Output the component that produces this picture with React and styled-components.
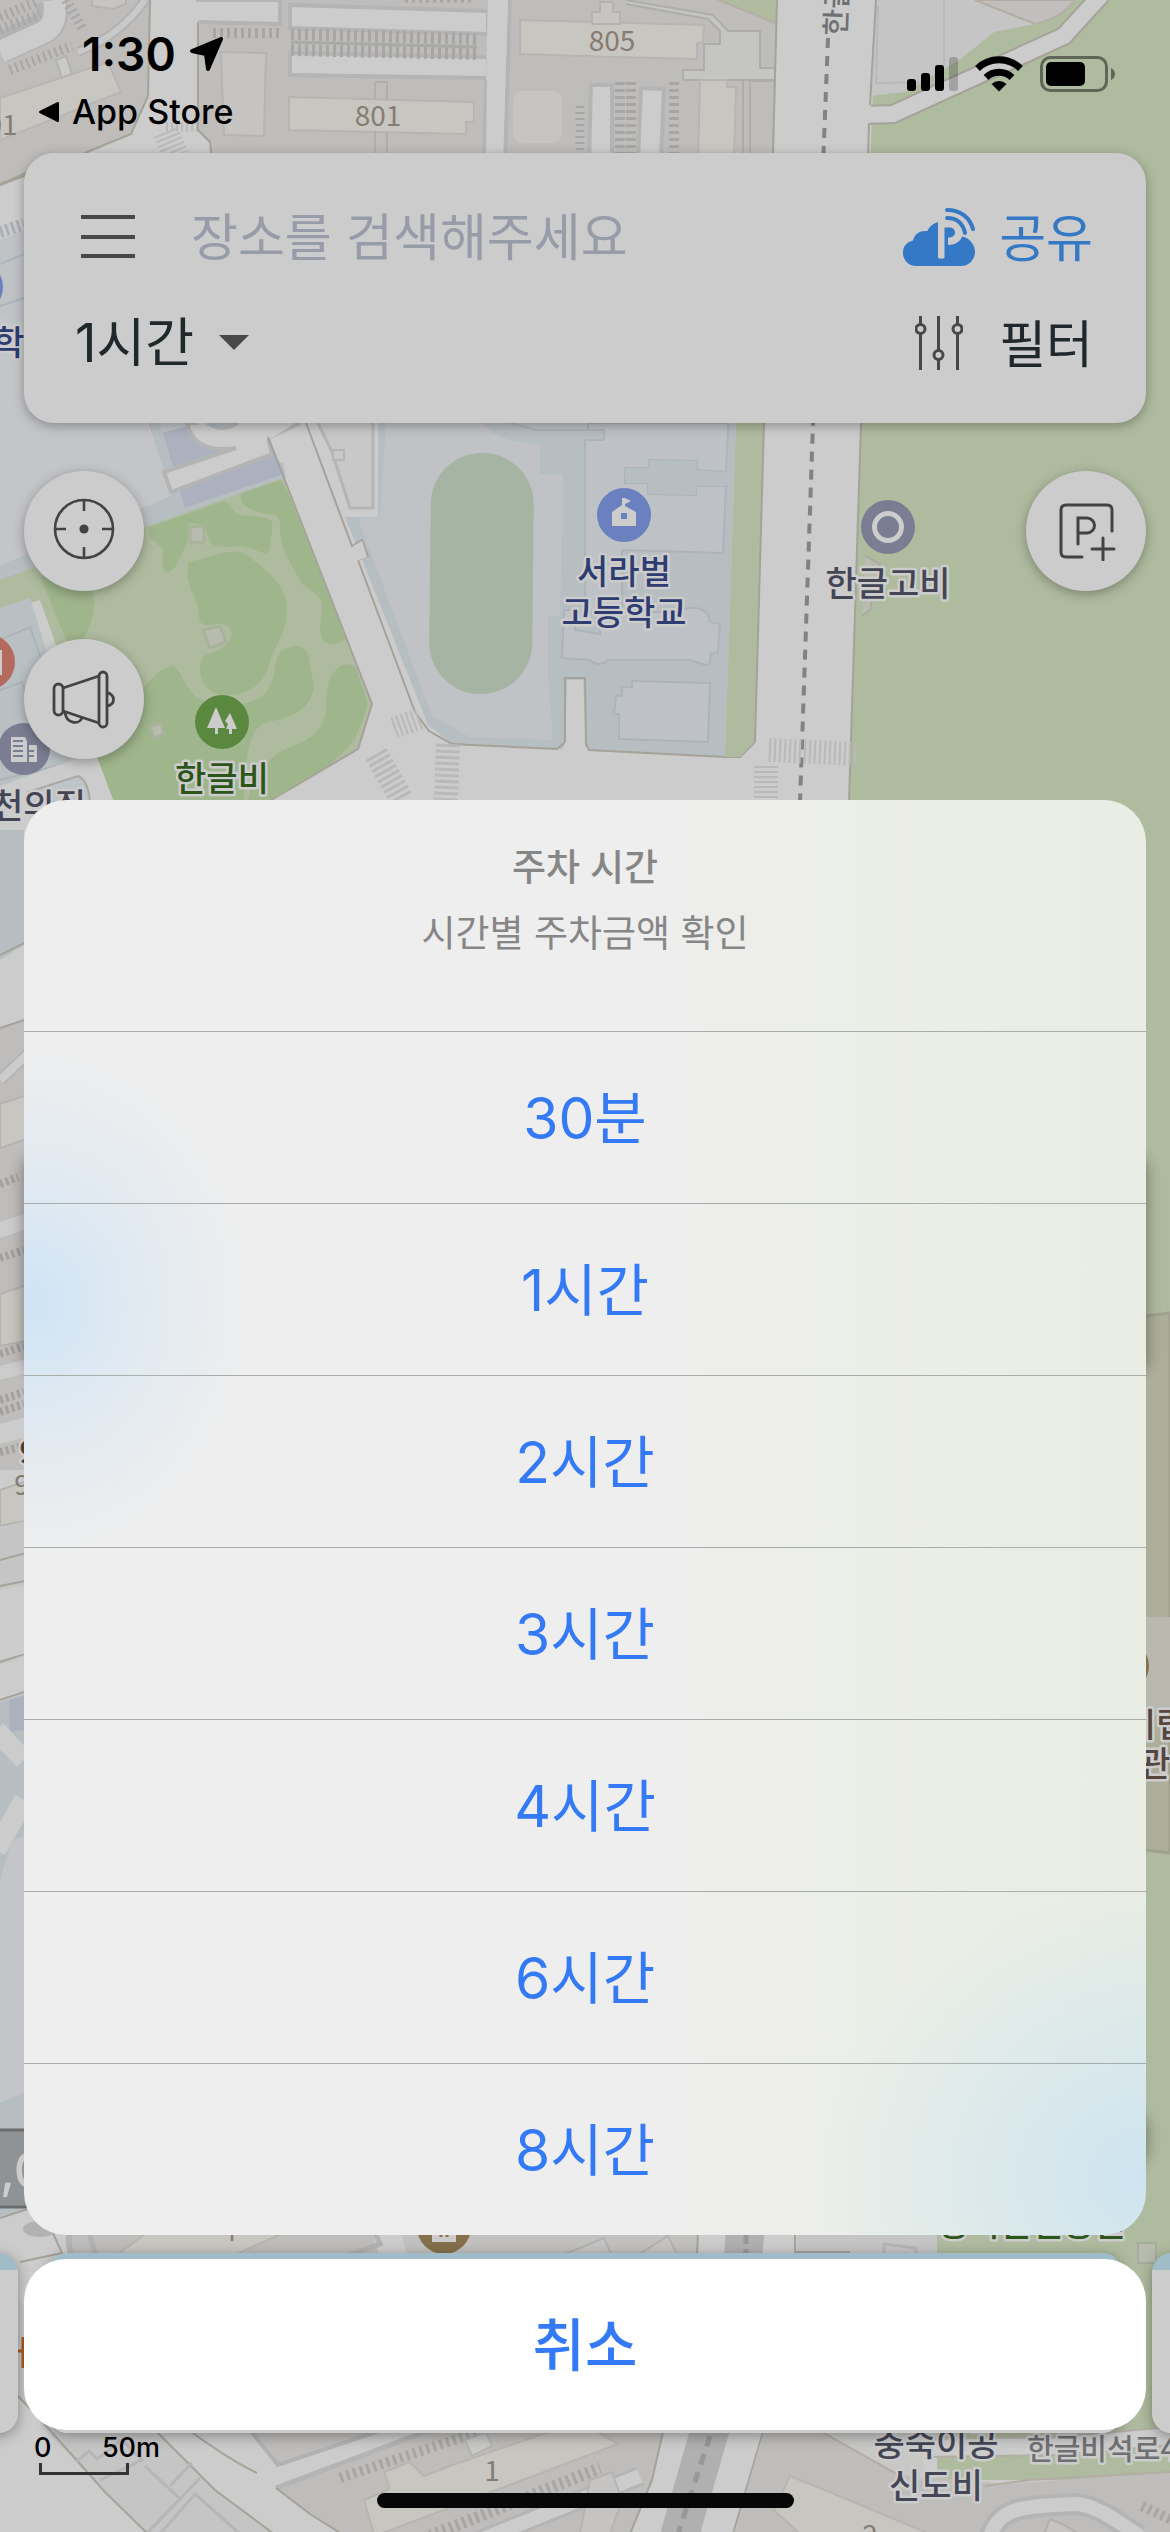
import React, { useState } from "react";
import styled, { createGlobalStyle } from "styled-components";

const durations = ["30분", "1시간", "2시간", "3시간", "4시간", "6시간", "8시간"];

const App = () => {
  const [duration, setDuration] = useState("1시간");
  const [query, setQuery] = useState("");

  return (
    <>
      <GlobalStyle />
      <Screen>
        <MapLayer />

        <Content>
          <StatusBar>
            <StatusLeft>
              <Clock>
                1:30 <LocationIcon />
              </Clock>
              <BackLink href="#">
                <BackIcon />
                App Store
              </BackLink>
            </StatusLeft>
            <StatusIcons />
          </StatusBar>

          <SearchCard>
            <SearchRow>
              <PlainButton aria-label="메뉴">
                <MenuIcon />
              </PlainButton>
              <SearchInput
                aria-label="장소 검색"
                placeholder="장소를 검색해주세요"
                value={query}
                onChange={(e) => setQuery(e.target.value)}
              />
              <TextButton $share>
                <CloudIcon />
                <span>공유</span>
              </TextButton>
            </SearchRow>
            <SearchRow>
              <SelectBox>
                <select aria-label="주차 시간" value={duration} onChange={(e) => setDuration(e.target.value)}>
                  {durations.map((item) => (
                    <option key={item}>{item}</option>
                  ))}
                </select>
                <CaretIcon />
              </SelectBox>
              <TextButton>
                <FilterIcon />
                <span>필터</span>
              </TextButton>
            </SearchRow>
          </SearchCard>

          <Tools>
            <ToolColumn>
              <RoundButton aria-label="현재 위치">
                <TargetIcon />
              </RoundButton>
              <RoundButton aria-label="공지">
                <MegaphoneIcon />
              </RoundButton>
            </ToolColumn>
            <ToolColumn>
              <RoundButton aria-label="주차장 추가">
                <ParkingAddIcon />
              </RoundButton>
            </ToolColumn>
          </Tools>

          <Carousel>
            <PlaceCard />
            <PlaceCard />
            <PlaceCard />
          </Carousel>

          <Footer>
            <Scale>
              <ScaleLabels>
                <span>0</span>
                <span>50m</span>
              </ScaleLabels>
              <ScaleBar />
            </Scale>
            <HomeIndicator />
          </Footer>
        </Content>

        <Overlay>
          <Sheet role="dialog" aria-labelledby="sheet-title">
            <SheetHeader>
              <h2 id="sheet-title">주차 시간</h2>
              <p>시간별 주차금액 확인</p>
            </SheetHeader>
            {durations.map((item) => (
              <SheetOption key={item} onClick={() => setDuration(item)}>
                {item}
              </SheetOption>
            ))}
          </Sheet>
          <CancelButton>취소</CancelButton>
        </Overlay>
      </Screen>
    </>
  );
};

/* status bar icons */

const LocationIcon = () => (
  <svg width="38" height="38" viewBox="0 0 38 38" aria-hidden="true">
    <path d="M4 16 L33 4 L20 34 L18 19 Z" stroke="#000" strokeWidth="4" strokeLinejoin="round" />
  </svg>
);

const BackIcon = () => (
  <svg width="22" height="22" viewBox="0 0 22 22" aria-hidden="true">
    <path d="M2 11 L20 2 V20 Z" stroke="#000" strokeWidth="2" strokeLinejoin="round" />
  </svg>
);

const StatusIcons = () => (
  <StatusSvg width="210" height="42" viewBox="0 0 210 42" aria-hidden="true">
    <rect x="0" y="26" width="9" height="12" rx="3" />
    <rect x="14" y="20" width="9" height="18" rx="3" />
    <rect x="28" y="12" width="9" height="26" rx="3" />
    <rect x="42" y="4" width="9" height="34" rx="3" opacity="0.2" />
    <g fill="none" stroke="#000" strokeWidth="7">
      <path d="M70.500 15.500 A31 31 0 0 1 113.500 15.500" />
      <path d="M79 24.500 A19 19 0 0 1 105 24.500" />
    </g>
    <path d="M84.500 31 A11 11 0 0 1 99.500 31 L92 38.500 Z" />
    <rect x="134.500" y="4.500" width="65" height="33" rx="9" fill="none" stroke="#000" strokeWidth="3" opacity="0.45" />
    <rect x="139" y="9" width="39" height="24" rx="5" />
    <path d="M204 15 Q208 17 208 21 Q208 25 204 27 Z" opacity="0.45" />
  </StatusSvg>
);

/* search card icons */

const MenuIcon = () => (
  <svg width="54" height="44" viewBox="0 0 54 44" aria-hidden="true">
    <path d="M0 2 H54 M0 22 H54 M0 41 H54" stroke="#484848" strokeWidth="4" />
  </svg>
);

const CloudIcon = () => (
  <svg width="72" height="58" viewBox="0 0 72 58" aria-hidden="true">
    <path
      fill="#3478c6"
      d="M13 58 A13 13 0 0 1 0 45 C0 38 4 34 10 32.500 C12 25 17 22.500 24.500 23 C26 19 30 15.500 35 14 V49 Q35 50.500 36.500 50.500 H40 Q41.500 50.500 41.500 49 V19.500 H47 A5 5 0 0 1 47 29.500 H45 V37 C52 37 57 34 59 28.500 C67 30 72 37 72 44 A14 14 0 0 1 58 58 Z"
    />
    <g fill="none" stroke="#3478c6" strokeWidth="4" strokeLinecap="round">
      <path d="M44 2 C58 2 67 10 70 21" />
      <path d="M44 10 C54 10 60 16 62 25" />
    </g>
  </svg>
);

const FilterIcon = () => (
  <svg width="48" height="54" viewBox="0 0 48 54" aria-hidden="true">
    <g fill="none" stroke="#484848" strokeWidth="3">
      <path d="M5.500 0 V8 M5.500 18 V54 M23.500 0 V34 M23.500 44 V54 M42.500 0 V8 M42.500 18 V54" />
      <circle cx="5.500" cy="13" r="4.500" />
      <circle cx="23.500" cy="39" r="4.500" />
      <circle cx="42.500" cy="13" r="4.500" />
    </g>
  </svg>
);

const CaretIcon = () => (
  <svg width="30" height="16" viewBox="0 0 30 16" aria-hidden="true">
    <path d="M0 0 H30 L15 15 Z" fill="#484848" />
  </svg>
);

/* round button icons */

const TargetIcon = () => (
  <svg width="62" height="66" viewBox="0 0 62 66" aria-hidden="true">
    <g fill="none" stroke="#434343" strokeWidth="2.6">
      <circle cx="31" cy="31" r="29" />
      <path d="M31 2 V13 M31 49 V60 M2 31 H13 M49 31 H60" />
    </g>
    <circle cx="31" cy="31" r="4.600" fill="#434343" />
  </svg>
);

const MegaphoneIcon = () => (
  <svg width="64" height="60" viewBox="0 0 64 60" aria-hidden="true">
    <g fill="none" stroke="#434343" strokeWidth="2.8">
      <rect x="2" y="15" width="9" height="31" rx="4.500" />
      <rect x="47" y="3" width="8" height="55" rx="4" />
      <path d="M11 19 L47 7 M11 42 L47 54 M55 24 A6.500 6.500 0 0 1 55 37 M13 43 C14 55 27 56 30 49" />
    </g>
  </svg>
);

const ParkingAddIcon = () => (
  <svg width="60" height="60" viewBox="0 0 60 60" aria-hidden="true">
    <g fill="none" stroke="#434343" strokeWidth="3" strokeLinecap="round">
      <path d="M26 56 H10 Q5 56 5 51 V9 Q5 4 10 4 H51 Q56 4 56 9 V30" />
      <path d="M22 43 V17 H31 A7.500 7.500 0 0 1 31 32 H22" />
      <path d="M47 37 V59 M36 48 H58" />
    </g>
  </svg>
);

/* the street map behind everything */

const MapLayer = () => (
  <MapSvg viewBox="0 0 1170 2532" preserveAspectRatio="xMidYMin slice" aria-hidden="true">
    <defs>
      <filter id="soft" x="-50%" y="-50%" width="200%" height="200%">
        <feGaussianBlur stdDeviation="7" />
      </filter>
    </defs>
    <rect width="1170" height="2532" fill="#cccccc" />
    <NorthBlocks />
    <MiddleBlocks />
    <EdgeStrips />
    <SouthBlocks />
  </MapSvg>
);

const NorthBlocks = () => (
  <g>
    {/* north west apartments */}
    <path d="M0 0 H150 L148 96 L131 134 L80 155 L0 185 Z" fill="#bfbdbb" />
    <path d="M150 0 L148 96 L131 134 L80 155 L0 185" fill="none" stroke="#a5a299" strokeWidth="2" />
    <path d="M0 48 L44 28 Q56 20 50 0" fill="none" stroke="#b2b2b2" strokeWidth="32" />
    <path d="M0 52 L44 32 Q58 24 54 0" fill="none" stroke="#cccccc" strokeWidth="22" />
    <path d="M0 17 L36 2 M0 29 L40 14 M10 70 L72 46 M66 0 L82 28" stroke="#a7a6a5" strokeWidth="10" strokeDasharray="2 4" />
    <path d="M145 0 Q120 36 78 52" fill="none" stroke="#b2b2b2" strokeWidth="10" />
    <path d="M145 0 Q120 36 78 52" fill="none" stroke="#c9c9c9" strokeWidth="6" />
    <path d="M92 0 V6 L113 9 L126 4 V0" fill="#c6c5c3" stroke="#b4b3b1" strokeWidth="2" />
    <path d="M0 98 L108 62 L121 92 L0 140 Z" fill="#c8c6c0" stroke="#b8b6b3" strokeWidth="2" />
    <path d="M56 60 L66 56 L72 74 L62 78 Z" fill="#cacac8" stroke="#b4b3b1" strokeWidth="2" />
    <path d="M166 132 L176 156" stroke="#b9b9b9" strokeWidth="26" strokeDasharray="2 3" />
    <path d="M166 127 H214" stroke="#b9b9b9" strokeWidth="9" strokeDasharray="2 3" />

    {/* blocks 801 and 805 */}
    <path d="M198 0 H778 L773 160 H212 L210 142 L198 130 Z" fill="#bfbdbb" />
    <path d="M198 22 V130 L210 142 L212 160" fill="none" stroke="#a5a299" strokeWidth="2" />
    <g fill="#cccccc" stroke="#b4b4b4" strokeWidth="4">
      <path d="M196 0 H280 V24 L198 22" />
      <path d="M290 5 L488 11 V34 L290 28 Z" />
      <path d="M290 53 L488 57 V78 L290 75 Z" />
      <path d="M488 -4 H510 L505 160 H484 L486 80" />
    </g>
    <path d="M488 2 H508 L503 160 H486 Z" fill="#cccccc" />
    <g stroke="#a7a6a5" strokeDasharray="3 4">
      <path d="M213 33 H280" strokeWidth="10" />
      <path d="M291 34 L477 39 M291 50 L477 54" strokeWidth="12" />
    </g>
    <path d="M291 42 L477 47" stroke="#a9a9a8" strokeWidth="3" />
    <path d="M221 52 L266 53 L264 136 L224 135 Z" fill="#c5c4c2" stroke="#b5b4b2" strokeWidth="2" />
    <path d="M289 97 L474 102 V122 H466 V134 L289 130 Z" fill="#c8c6c0" stroke="#b7b5b1" strokeWidth="2" />
    <path d="M375 82 H387 V100 M375 82 V99 M375 131 V160 M387 133 V160" fill="none" stroke="#b0afad" strokeWidth="2" />
    <rect x="513" y="91" width="49" height="52" rx="10" fill="#c6c5c3" />
    <path d="M520 20 L704 25 L703 42 L697 43 V59 L616 57 L520 54 Z" fill="#c8c6c0" stroke="#b7b5b1" strokeWidth="2" />
    <path d="M626 0 L713 15 L728 31 H760 V68 H778 V80 H683 V70 H704 V44 H720 V31 L708 19 L626 4" fill="#c5c5c4" stroke="#aeadab" strokeWidth="2" />
    <path d="M592 24 V12 H600 V2 H613 V12 H620 V24 Z" fill="#c6c5c3" stroke="#b4b3b1" strokeWidth="2" />
    <g fill="#cccccc" stroke="#b4b4b4" strokeWidth="4">
      <path d="M591 85 H612 V160 H589 Z" />
      <path d="M641 88 L664 89 L661 160 H638 Z" />
    </g>
    <path d="M620 82 V160 M631 82 V160 M674 82 V160" stroke="#a7a6a5" strokeWidth="10" strokeDasharray="3 4" />
    <path d="M700 80 H727 V87 H736 L734 160 H698 Z" fill="#c8c6c0" stroke="#b7b5b1" strokeWidth="2" />
    <path d="M743 80 V160 M750 160 V81 H776" fill="none" stroke="#aeadab" strokeWidth="2" />
    <path d="M580 106 V150" stroke="#a7a6a5" strokeWidth="9" strokeDasharray="2 4" />
    <path d="M405 0 H475" stroke="#a7a6a5" strokeWidth="5" strokeDasharray="3 4" />
    <path d="M716 0 L775 23 L777 0 Z" fill="#b0bb9f" />
    <path d="M719 0 L775 23" stroke="#b4aea6" strokeWidth="2" />

    {/* forest along the east side */}
    <path d="M876 0 H1170 V2300 H880 L849 800 L861 423 Z" fill="#afbb9f" />
    <path d="M876 0 H975 L1035 24 L994 32 L962 58 L905 92 L871 96 Z" fill="#c5c5c5" />
    <path d="M944 0 V64 L937 82 L876 83 L878 6" fill="none" stroke="#b9b9b9" strokeWidth="2" />
    <path d="M975 0 H1075 Q1062 18 1035 24 Z" fill="#c1bfbd" stroke="#b3ada4" strokeWidth="2" />
    <path d="M866 115 L893 114 L1064 36 L1104 -8" fill="none" stroke="#a5a299" strokeWidth="20" />
    <path d="M862 115 L893 114 L1064 36 L1104 -8" fill="none" stroke="#cccccc" strokeWidth="16" />

    <MapNumber x="378" y="126">801</MapNumber>
    <MapNumber x="612" y="51">805</MapNumber>
    <MapNumber x="2" y="135">01</MapNumber>

    {/* slivers beside the search card */}
    <path d="M0 240 L24 230 V440 H0 Z" fill="#c0c3c6" />
    <path d="M0 232 L24 224" stroke="#aab0b8" strokeWidth="12" strokeDasharray="3 3" />
    <path d="M0 184 L26 173" stroke="#a5a299" strokeWidth="2" />
    <path d="M0 264 L24 254 M0 306 L24 298" stroke="#aeb5ba" strokeWidth="2" />
  </g>
);

const MiddleBlocks = () => (
  <g>
    {/* school office and park */}
    <path d="M0 315 L140 410 L180 500 L0 570 Z" fill="#c4c5c8" />
    <path d="M0 565 L176 494 L283 462 L286 478 L0 590 Z" fill="#b7bec2" />
    <path d="M148 423 H196 L275 452 L284 474 L184 508 Z" fill="#abb1bf" />
    <path d="M148 423 H160 L184 505 L176 507 Z" fill="#b7bec2" />
    <path d="M160 423 H186 V427 L161 433 Z" fill="#c1c5c8" />
    <path d="M187 423 C192 446 210 452 236 448 L164 472 L171 492 L272 454 L268 438 L300 423 Z" fill="#cccccc" stroke="#b4b4b4" strokeWidth="4" />
    <path d="M190 420 H300 L272 438 L240 446 Z" fill="#cccccc" />
    <path d="M207 423 Q222 434 238 423" fill="#aeb8c2" stroke="#b4b4b4" strokeWidth="3" />
    <path d="M0 580 L145 527 L283 478 L372 704 L358 749 L268 802 H112 L40 600 L0 612 Z" fill="#afbb9f" />
    <path d="M268 437 L372 704 L358 749 L268 802 M97 760 L115 802" fill="none" stroke="#a5a299" strokeWidth="2" />
    <g fill="#9fb58c">
      <path d="M150 527 L224 501 C236 508 228 514 250 516 C276 518 272 520 272 532 C268 566 268 550 240 546 C222 548 210 548 208 536 C204 526 200 522 188 524 V540 C182 552 176 572 168 572 C160 572 164 556 163 548 C154 542 146 536 150 527 Z" />
      <path d="M242 493 L280 480 L290 496 L346 640 C326 650 320 640 320 626 C324 596 324 600 302 584 C290 560 282 554 280 532 C282 506 270 520 248 508 C240 502 240 498 242 493 Z" />
      <path d="M188 562 C206 560 228 546 246 554 C270 574 288 586 287 612 C286 634 274 646 268 668 C260 690 240 698 218 694 C200 690 196 666 204 656 C224 650 234 640 231 630 C222 614 200 636 199 616 C198 594 184 588 188 562 Z" />
      <path d="M280 652 C292 644 304 644 308 654 L314 686 C310 716 282 718 262 724 C252 732 246 742 244 800 H112 L97 757 L145 686 C152 678 160 668 172 666 C182 668 186 694 202 700 C220 712 240 706 260 698 C278 684 272 664 280 652 Z" />
      <path d="M338 668 C346 662 352 664 356 668 L368 704 C356 744 350 746 330 764 L276 797 L268 800 H248 C252 776 268 756 292 746 C310 740 326 730 326 706 C326 690 328 676 338 668 Z" />
      <path d="M40 576 L92 590 C98 612 88 632 80 644 L66 640 Z" />
    </g>
    <g fill="#b8bcae" stroke="#a9b29b" strokeWidth="3">
      <path d="M190 527 L204 526 V543 L190 542 Z" />
      <path d="M203 630 L220 626 L226 642 L210 648 Z" />
      <path d="M150 726 L161 723 L164 734 L154 738 Z" />
    </g>
    <path d="M0 608 L30 598 L68 720 L97 757 L0 800 Z" fill="#b9c0c3" />
    <path d="M0 640 L30 627 L52 690 M0 690 L22 682 L40 740 M0 780 L96 756" fill="none" stroke="#acb3b8" strokeWidth="2" />
    <path d="M0 786 L78 758 L97 757 L114 802 H0 Z" fill="#cccccc" />
    <path d="M28 792 L78 776 Q88 780 90 802 H30 Z" fill="#bec4c7" stroke="#a9a9a4" strokeWidth="2" />

    {/* school grounds */}
    <path d="M316 423 H374 V508 H350 L332 452 Z" fill="#c8c8c8" />
    <path d="M318 423 L332 452 L350 508 H373 V423" fill="none" stroke="#b5b5b5" strokeWidth="3" />
    <rect x="333" y="450" width="11" height="10" fill="#c8c8c8" stroke="#b5b5b5" strokeWidth="2" />
    <path d="M378 423 H736 L725 757 L452 744 L428 725 L345 517 H378 Z" fill="#b7bec2" />
    <path d="M386 423 H482 Q500 444 540 444 V474 H563 L560 616 H548 V672 L553 740 L470 737 L432 716 L358 518 H380 Z" fill="#c1c2c6" />
    <path d="M510 423 L536 430 H600 V423" fill="#bec2c6" stroke="#adb3b7" strokeWidth="2" />
    <path d="M306 423 L352 546 L362 540 L368 556 L358 560 L415 712 L429 731 L452 744 L557 749 L565 742" fill="none" stroke="#a5a299" strokeWidth="2" />
    <path d="M353 546 L362 541 L367 557 L357 561 Z" fill="#cccccc" />
    <rect x="430" y="453" width="103" height="241" rx="51" fill="#a6b4a3" transform="rotate(0.600 481 573)" />
    <path d="M562 750 L565 744 L567 680 H583 L586 744 L590 752 Z" fill="#cccccc" />
    <path d="M565 742 V678 H585 L586 744 L589 750 L725 757 H740 L755 742 L764 423" fill="none" stroke="#a5a299" strokeWidth="2" />
    <path d="M736 423 H763 L754 742 L740 757 H725 Z" fill="#afbb9f" />
    <g fill="#bec2c6" stroke="#adb3b7" strokeWidth="2">
      <path d="M588 423 H728 V430 L726 472 L697 470 V461 L649 460 V468 H625 V483 H648 V494 L696 495 V486 H726 L723 553 L622 550 V606 L600 612 H585 V440 H604 V430 H588 Z" />
      <path d="M564 610 H575 V630 L600 634 V612 L672 612 L688 608 Q708 606 710 622 L720 624 L718 652 L710 654 Q712 668 702 664 L690 660 H608 Q598 668 590 660 L562 658 Z" />
      <path d="M632 681 L710 683 L708 742 L619 739 V714 L614 714 L616 696 H622 V687 H632 Z" />
    </g>
    <path d="M649 460 L697 461 V470 L726 472 V486 H696 V495 L648 494 V483 H625 V468 H649 Z" fill="#b7bec2" />

    {/* boulevard */}
    <path d="M777 0 L773 153 L764 423 L755 742 L760 800 H849 L861 423 L869 153 L875 0 Z" fill="#cccccc" />
    <path d="M777 0 L773 153 L764 423 L755 742" fill="none" stroke="#a5a299" strokeWidth="2" />
    <path d="M876 0 L870 105 M869 123 L861 423 L849 802" fill="none" stroke="#a5a299" strokeWidth="2" />
    <path d="M828 38 L813 423 L800 802" fill="none" stroke="#828282" strokeWidth="4" strokeDasharray="10 8" />
    <g stroke="#b9b9b9">
      <path d="M769 750 L858 754" strokeWidth="24" strokeDasharray="2 3" />
      <path d="M766 766 V800" strokeWidth="24" strokeDasharray="2 3" />
      <path d="M448 744 L446 800" strokeWidth="24" strokeDasharray="3 3" />
      <path d="M376 754 L402 800" strokeWidth="24" strokeDasharray="3 3" />
      <path d="M394 728 L422 718" strokeWidth="22" strokeDasharray="2 3" />
    </g>
    <path d="M865 556 L880 564 L870 610 L862 616" fill="#b9bcb0" stroke="#a9ac9f" strokeWidth="2" />
    <RoadLabel transform="translate(846 36) rotate(-88)">한글</RoadLabel>

    {/* pins */}
    <circle cx="624" cy="515" r="27" fill="#6b80bf" />
    <path d="M612 526 V512 L622 505 V498 H625 L631 501 L625 504 V506 L636 512 V526 Z" fill="#cccccc" />
    <rect x="621" y="513" width="6" height="6" fill="#6b80bf" />
    <MapLabel x="624" y="584" $color="#2f3c72">서라벌</MapLabel>
    <MapLabel x="624" y="625" $color="#2f3c72">고등학교</MapLabel>
    <circle cx="888" cy="527" r="27" fill="#7b7e92" />
    <circle cx="888" cy="527" r="13.500" fill="none" stroke="#cccccc" strokeWidth="5" />
    <MapLabel x="888" y="596" $color="#444655">한글고비</MapLabel>
    <circle cx="222" cy="722" r="27" fill="#5b883f" />
    <path d="M216 707 L225 728 H218 V734 H215 V728 H207 Z M230 713 L237 729 H232 V734 H229 V729 H226 L228 724 L225 721 Z" fill="#cccccc" />
    <MapLabel x="222" y="791" $color="#2c551a">한글비</MapLabel>
    <circle cx="24" cy="749" r="26" fill="#7b7e92" />
    <path d="M11 737 H25 L27 741 V762 H11 Z M29 745 H37 V762 H29 Z" fill="#cccccc" />
    <path d="M13 741 H23 M13 746 H23 M13 751 H23 M13 756 H23 M29 751 H34 M29 756 H34" stroke="#7b7e92" strokeWidth="2" />
    <MapLabel x="39" y="818" $color="#444655">천의집</MapLabel>
    <circle cx="-13" cy="662" r="28" fill="#b56a60" />
    <rect x="-10" y="650" width="12" height="25" fill="#cccccc" />
    <circle cx="-24" cy="287" r="27" fill="#6b80bf" />
    <MapLabel x="9" y="355" $color="#2f3c72">학</MapLabel>
  </g>
);

const EdgeStrips = () => (
  <g>
    {/* west strip, next to the sheet */}
    <path d="M0 830 H24 V945 L0 960 Z" fill="#b7bec2" />
    <path d="M0 1028 L60 1010 V1470 H0 Z" fill="#bfbdbb" />
    <path d="M0 955 L60 925 M0 1028 L60 1008" stroke="#a5a299" strokeWidth="2" />
    <path d="M0 1080 L30 1052" stroke="#b4b4b4" strokeWidth="12" />
    <path d="M0 1080 L30 1052" stroke="#cccccc" strokeWidth="8" />
    <path d="M0 1104 L30 1094 V1138 L0 1148 Z M0 1294 L30 1284 V1340 L0 1346 Z M0 1490 L30 1480 V1520 L0 1526 Z" fill="#c8c6c0" stroke="#b4b3b1" strokeWidth="2" />
    <path d="M0 1222 L30 1212 V1228 L0 1238 Z M0 1366 L30 1358 V1372 L0 1380 Z M0 1424 L30 1416 V1436 L0 1444 Z" fill="#cccccc" />
    <path d="M0 1184 L18 1177 M0 1258 L24 1250 M0 1354 L24 1346 M0 1400 L24 1392 M0 1412 L24 1404 M0 1452 L24 1446" stroke="#a2a19f" strokeWidth="8" strokeDasharray="3 3" />
    <path d="M0 1528 L30 1520 V1655 L0 1665 Z" fill="#c5c5c5" />
    <path d="M0 1560 L30 1552 M0 1586 L30 1580 M0 1662 L30 1652 M0 1700 L30 1690" stroke="#a5a299" strokeWidth="2" />
    <path d="M0 1590 L30 1584 V1652 L0 1660 Z" fill="#cccccc" />
    <path d="M0 1702 L30 1692 V1850 L0 1880 Z" fill="#b7bec2" />
    <path d="M9 1700 L24 1696 V1730 L10 1732 Z" fill="#abb1bf" />
    <path d="M-4 1730 L24 1760 M-4 1850 L24 1800" stroke="#cccccc" strokeWidth="20" />
    <path d="M0 1880 L12 1840 L30 1835 V2090 L0 2105 Z" fill="#c4c5c8" />
    <path d="M0 2103 L30 2090 V2210 L0 2216 Z" fill="#b7bec2" />
    <rect x="-10" y="2130" width="50" height="77" fill="#8f9396" stroke="#6c6c6c" strokeWidth="3" />
    <PriceLabel x="0" y="2188">,0</PriceLabel>
    <MapLabel x="29" y="1464" $color="#4a4038">9</MapLabel>
    <MapNumber x="22" y="1495">9</MapNumber>

    {/* east strip */}
    <path d="M1130 1318 L1170 1313 V1853 L1130 1848 Z" fill="#acae9a" stroke="#a0a190" strokeWidth="3" />
    <path d="M1130 1617 H1170 V1715 H1130 Z" fill="#b8b8ae" />
    <circle cx="1124" cy="1666" r="25" fill="#84704c" />
    <MapLabel x="1156" y="1737" $color="#55463f">시립</MapLabel>
    <MapLabel x="1155" y="1776" $color="#55463f">관</MapLabel>

    <g filter="url(#soft)" opacity="0.3">
      <rect x="22" y="1155" width="60" height="218" rx="16" />
      <rect x="1088" y="1155" width="60" height="218" rx="16" />
      <rect x="1088" y="2112" width="60" height="54" rx="16" />
    </g>
  </g>
);

const SouthBlocks = () => (
  <g>
    <path d="M0 2218 L40 2205 L62 2253 L20 2262" fill="none" stroke="#a5a299" strokeWidth="2" />
    <ellipse cx="40" cy="2229" rx="17" ry="8" fill="#b2b2b2" />
    <path d="M70 2230 Q66 2244 74 2260 H380 L372 2230 Z" fill="#bfbdbb" />
    <path d="M70 2230 Q66 2244 74 2260" fill="none" stroke="#b4b4b4" strokeWidth="6" />
    <path d="M88 2230 L96 2256 M374 2230 L380 2244 L346 2256" fill="none" stroke="#b2b2b2" strokeWidth="5" />
    <path d="M150 2230 H290 L232 2256 H116 Z" fill="#c8c6c0" stroke="#b7b5b1" strokeWidth="2" />
    <path d="M400 2230 H700 V2256 H408 Z" fill="#c2c1bf" />
    <path d="M380 2230 H398 L408 2256 H386 Z" fill="#cccccc" />
    <path d="M560 2256 L604 2238 L612 2256 M636 2256 L668 2236 L678 2256" fill="#c5c4c2" stroke="#b2b2b2" strokeWidth="2" />
    <path d="M699 2230 H796 V2256 H697 Z" fill="#cccccc" />
    <path d="M726 2230 H765 L762 2256 H724 Z" fill="#b0b0b0" />
    <path d="M746 2234 V2256" stroke="#989898" strokeWidth="5" strokeDasharray="10 5" />
    <path d="M797 2230 H938 V2256 H797 Z" fill="#c5c5c5" />
    <path d="M698 2230 L697 2256 M795 2230 V2252 H850" fill="none" stroke="#a5a299" strokeWidth="2" />
    <path d="M884 2256 V2244 L916 2248 V2256" fill="none" stroke="#b5b5b5" strokeWidth="3" />
    <path d="M937 2230 H1170 V2480 H937 Z" fill="#afbb9f" />
    <rect x="1138" y="2243" width="18" height="20" fill="#b8bcae" stroke="#a6ad9b" strokeWidth="2" />
    <circle cx="444" cy="2227" r="27" fill="#84704c" />
    <path d="M432 2230 H456 V2242 H432 Z" fill="#cccccc" />
    <path d="M441 2230 V2237 M447 2230 V2237" stroke="#84704c" strokeWidth="3" />
    <MapNumber x="229" y="2241">4</MapNumber>
    <MapLabel x="1032" y="2236" $color="#2c551a">충숙근린공원</MapLabel>
    <path d="M18 2300 L24 2306 V2400 H18 Z" fill="#c5c5c5" />
    <path d="M23 2337 V2368 M18 2351 H24" stroke="#a75a1c" strokeWidth="3" />

    {/* below the cancel button */}
    <path d="M40 2425 L105 2492 L148 2532 H272 L215 2490 L156 2433 Z" fill="#c5c5c5" />
    <path d="M18 2396 L48 2428 L105 2492 L148 2534 M156 2431 L215 2490 L274 2534 M190 2431 Q230 2460 257 2473" fill="none" stroke="#a5a299" strokeWidth="2" />
    <path d="M76 2462 L89 2451 L97 2459 L122 2440 L142 2460 L100 2480 M145 2466 L180 2499 L200 2478 M170 2486 L192 2463 M180 2499 L148 2532 M160 2534 L195 2494 L240 2534" fill="none" stroke="#b6b6b6" strokeWidth="3" />
    <path d="M250 2430 H382 L278 2465 Z" fill="#bfbdbb" stroke="#b2b2b2" strokeWidth="4" />
    <path d="M276 2488 L432 2430 H700 L660 2534 H340 L308 2512 Z" fill="#bfbdbb" />
    <path d="M276 2488 L430 2430" stroke="#b4b4b4" strokeWidth="5" />
    <path d="M276 2488 L310 2514 L342 2534" fill="none" stroke="#a5a299" strokeWidth="2" />
    <path d="M340 2478 L490 2428" stroke="#a7a6a5" strokeWidth="10" strokeDasharray="3 4" />
    <path d="M364 2500 L390 2489 L384 2472 L410 2462 L424 2476 L450 2466 L560 2428 H590 L618 2444 L470 2500 L380 2534 H374 Z" fill="#c8c6c0" stroke="#b7b5b1" strokeWidth="2" />
    <path d="M465 2440 L486 2432 L492 2446 L472 2456 Z" fill="#c8c8c7" stroke="#b4b3b1" strokeWidth="2" />
    <path d="M430 2536 L600 2468" stroke="#a7a6a5" strokeWidth="12" strokeDasharray="3 4" />
    <path d="M470 2544 L640 2476" stroke="#b4b4b4" strokeWidth="20" />
    <path d="M470 2544 L640 2476" stroke="#cccccc" strokeWidth="14" />
    <path d="M590 2480 L612 2472 L622 2500 L610 2534 H580 Z" fill="#c5c4c2" stroke="#b5b4b2" strokeWidth="2" />

    <path d="M664 2430 H764 L732 2534 H630 L652 2482 Z" fill="#cccccc" />
    <path d="M690 2430 H730 L700 2534 H660 Z" fill="#b0b0b0" />
    <path d="M710 2436 L678 2534" stroke="#989898" strokeWidth="5" strokeDasharray="11 8" />
    <path d="M763 2432 L733 2534 M663 2432 L652 2480 L630 2534" fill="none" stroke="#a5a299" strokeWidth="2" />
    <path d="M764 2430 H824 L900 2474 L1005 2484 L1170 2472 V2534 H734 Z" fill="#bfbdbb" />
    <path d="M820 2430 H920 L925 2480 L900 2474 Z" fill="#c8c8c7" />
    <path d="M822 2432 L900 2476 M985 2486 L1030 2480 L1170 2472" fill="none" stroke="#b3ada4" strokeWidth="2" />
    <path d="M925 2448 L1060 2446 L1170 2436" fill="none" stroke="#b3ada4" strokeWidth="20" />
    <path d="M925 2448 L1060 2446 L1170 2436" fill="none" stroke="#cccccc" strokeWidth="16" />
    <path d="M790 2476 L810 2484 L930 2534 H800 L774 2510 Z" fill="#c8c6c0" stroke="#b7b5b1" strokeWidth="2" />
    <path d="M990 2536 C1000 2508 1020 2506 1076 2504 C1100 2506 1120 2524 1140 2536" fill="none" stroke="#b4b4b4" strokeWidth="22" />
    <path d="M990 2536 C1000 2508 1020 2506 1076 2504 C1100 2506 1120 2524 1140 2536" fill="none" stroke="#cccccc" strokeWidth="14" />
    <path d="M1142 2506 L1172 2520" stroke="#a7a6a5" strokeWidth="10" strokeDasharray="3 4" />
    <path d="M1044 2534 L1050 2519 L1062 2524 L1076 2532" fill="#c5c4c2" stroke="#b0afad" strokeWidth="2" />

    <MapNumber x="492" y="2481">1</MapNumber>
    <MapNumber x="870" y="2545">2</MapNumber>
    <MapLabel x="936" y="2456" $color="#444655">충숙이공</MapLabel>
    <MapLabel x="936" y="2498" $color="#444655">신도비</MapLabel>
    <RoadLabel x="1027" y="2460">한글비석로4</RoadLabel>
  </g>
);

const GlobalStyle = createGlobalStyle`
  *,
  *::before,
  *::after {
    box-sizing: border-box;
  }

  body {
    margin: 0;
    background: #cccccc;
    font-family: Inter, "Noto Sans CJK KR", sans-serif;
  }

  h2,
  p {
    margin: 0;
  }

  button,
  input,
  select {
    font-family: inherit;
  }
`;

/* map, page and sheet share one grid cell */
const Screen = styled.main`
  display: grid;
  min-height: 100vh;
  position: relative;
  overflow: hidden;
`;

const MapSvg = styled.svg`
  position: absolute;
  inset: 0;
  width: 100%;
  height: 100%;
`;

const MapLabel = styled.text`
  font-family: "Noto Sans CJK KR", sans-serif;
  font-size: 34px;
  font-weight: 500;
  text-anchor: middle;
  fill: ${({ $color }) => $color};
  stroke: #cccccc;
  stroke-width: 5px;
  stroke-linejoin: round;
  paint-order: stroke;
`;

const MapNumber = styled.text`
  font-family: "Noto Sans CJK KR", sans-serif;
  font-size: 28px;
  text-anchor: middle;
  fill: #857c73;
`;

const RoadLabel = styled.text`
  font-family: "Noto Sans CJK KR", sans-serif;
  font-size: 29px;
  font-weight: 500;
  fill: #6f7072;
  stroke: #cccccc;
  stroke-width: 5px;
  stroke-linejoin: round;
  paint-order: stroke;
`;

const PriceLabel = styled.text`
  font-size: 50px;
  font-weight: 500;
  fill: #cccccc;
`;

const Content = styled.div`
  grid-area: 1 / 1;
  min-width: 0;
  position: relative;
  display: flex;
  flex-direction: column;
`;

const StatusBar = styled.header`
  display: flex;
  justify-content: space-between;
  align-items: flex-start;
  height: 153px;
  padding: 26px 53px 0 38px;
`;

const StatusLeft = styled.div`
  display: flex;
  flex-direction: column;
  gap: 2px;
`;

const StatusSvg = styled.svg`
  margin-top: 27px;
`;

const Clock = styled.div`
  display: flex;
  align-items: center;
  gap: 12px;
  padding-left: 44px;
  font-size: 46px;
  font-weight: 600;
  line-height: 56px;
`;

const BackLink = styled.a`
  display: flex;
  align-items: center;
  gap: 12px;
  color: #000;
  font-size: 34px;
  font-weight: 500;
  line-height: 56px;
  text-decoration: none;
`;

const SearchCard = styled.section`
  display: flex;
  flex-direction: column;
  gap: 6px;
  margin: 0 24px;
  padding: 34px 53px 30px 51px;
  border-radius: 30px;
  background: #cccccc;
  box-shadow: 0 3px 12px rgba(0, 0, 0, 0.3);
`;

const SearchRow = styled.div`
  display: flex;
  align-items: center;
  justify-content: space-between;
  height: 100px;
`;

const PlainButton = styled.button`
  display: flex;
  padding: 0 6px;
  border: none;
  background: none;
  cursor: pointer;
`;

const SearchInput = styled.input`
  flex: 1;
  min-width: 0;
  margin-left: 50px;
  padding: 0;
  border: none;
  background: none;
  color: #20282b;
  font-size: 51px;

  &::placeholder {
    color: #989ca8;
    opacity: 1;
  }

  &:focus {
    outline: none;
  }
`;

const TextButton = styled.button`
  display: flex;
  align-items: center;
  gap: ${({ $share }) => ($share ? "24px" : "36px")};
  padding: 0;
  border: none;
  background: none;
  color: ${({ $share }) => ($share ? "#3478c6" : "#20282b")};
  font-size: 51px;
  cursor: pointer;

  span {
    padding-bottom: 4px;
  }
`;

const SelectBox = styled.div`
  display: flex;
  align-items: center;
  gap: 12px;

  select {
    padding: 0;
    border: none;
    appearance: none;
    background: none;
    color: #20282b;
    font-size: 53px;
  }
`;

const Tools = styled.div`
  display: flex;
  justify-content: space-between;
  margin: 48px 24px 0;
`;

const ToolColumn = styled.div`
  display: flex;
  flex-direction: column;
  gap: 48px;
`;

const RoundButton = styled.button`
  display: flex;
  align-items: center;
  justify-content: center;
  width: 120px;
  height: 120px;
  padding: 0;
  border: none;
  border-radius: 50%;
  background: #cccccc;
  box-shadow: 0 3px 12px rgba(0, 0, 0, 0.3);
  cursor: pointer;
`;

const Carousel = styled.div`
  display: flex;
  justify-content: center;
  gap: 30px;
  margin-top: auto;
`;

const PlaceCard = styled.article`
  flex: none;
  width: calc(100% - 96px);
  height: 180px;
  border-radius: 20px;
  background: linear-gradient(#9fbcc8 17px, #cccccc 17px);
  box-shadow: 0 3px 14px rgba(0, 0, 0, 0.35);
`;

const Footer = styled.footer`
  display: flex;
  flex-direction: column;
  justify-content: space-between;
  height: 99px;
  padding-bottom: 24px;
`;

const Scale = styled.div`
  width: 126px;
  margin-left: 34px;
`;

const ScaleLabels = styled.div`
  display: flex;
  justify-content: space-between;
  font-size: 27px;
  font-weight: 500;
  line-height: 30px;
`;

const ScaleBar = styled.div`
  width: 90px;
  height: 12px;
  margin-left: 5px;
  border: 3px solid #333333;
  border-top: none;
`;

const HomeIndicator = styled.div`
  align-self: center;
  width: 417px;
  height: 15px;
  border-radius: 8px;
  background: #070707;
`;

const Overlay = styled.div`
  grid-area: 1 / 1;
  min-width: 0;
  position: relative;
  display: flex;
  flex-direction: column;
  align-self: end;
  gap: 24px;
  padding: 0 24px 102px;
`;

const Sheet = styled.section`
  display: flex;
  flex-direction: column;
  overflow: hidden;
  border-radius: 42px;
  background:
    radial-gradient(ellipse 220px 260px at 1% 35%, #cfe4f5, rgba(214, 230, 244, 0.5) 50%, rgba(238, 238, 238, 0)),
    radial-gradient(ellipse 330px 290px at 100% 96%, #cee4f0, rgba(210, 230, 238, 0.6) 50%, rgba(233, 238, 228, 0)),
    linear-gradient(90deg, #eeeeee 55%, #ebeee6 82%, #e9ede4);
`;

const SheetHeader = styled.div`
  height: 231px;
  padding-top: 40px;
  color: #868686;
  font-size: 37px;
  line-height: 56px;
  text-align: center;

  h2 {
    font-size: inherit;
    font-weight: 500;
  }

  p {
    margin-top: 10px;
  }
`;

const SheetOption = styled.button`
  height: 172px;
  padding: 0 0 8px;
  border: none;
  border-top: 1px solid #a9afad;
  background: none;
  color: #347af6;
  font-size: 57px;
  cursor: pointer;
`;

const CancelButton = styled.button`
  height: 171px;
  padding: 0 0 8px;
  border: none;
  border-radius: 42px;
  background: #ffffff;
  color: #347af6;
  font-size: 57px;
  font-weight: 500;
  cursor: pointer;
`;

export default App;
